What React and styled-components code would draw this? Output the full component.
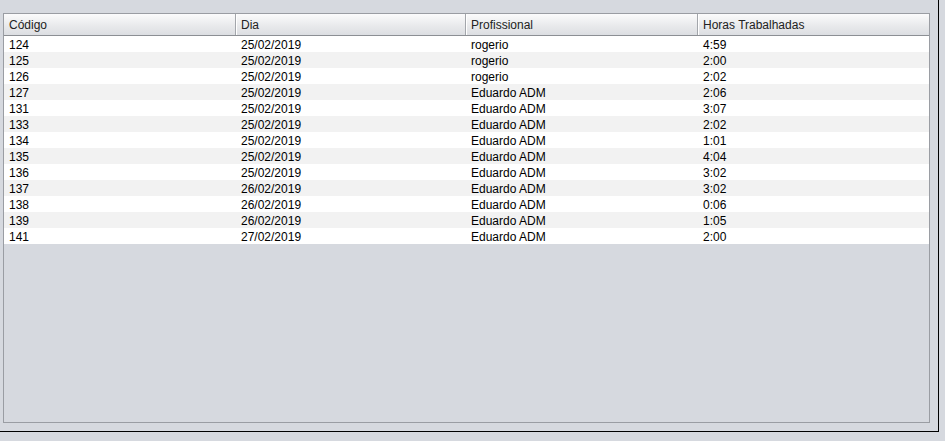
import React from 'react';
import styled, { createGlobalStyle } from 'styled-components';

const Global = createGlobalStyle`
  html, body {
    margin: 0;
    padding: 0;
    background: #d6d9df;
    font-family: "Liberation Sans", Arial, sans-serif;
  }
`;

const Frame = styled.div`
  box-sizing: border-box;
  width: 939px;
  height: 432px;
  border-right: 1px solid #000;
  border-bottom: 1px solid #000;
  padding: 13px 8px 8px 3px;
`;

const ScrollPane = styled.div`
  box-sizing: border-box;
  width: 927px;
  height: 410px;
  border: 1px solid #9a9da3;
  background: #d6d9df;
`;

const Table = styled.div`
  display: flex;
  flex-direction: column;
`;

const HeaderRow = styled.div`
  display: grid;
  grid-template-columns: 232px 230px 232px 1fr;
  height: 21px;
  border-bottom: 1px solid #8c8f94;
  background: linear-gradient(#fbfbfc, #e9eaec 55%, #dcdee2);
`;

const HeaderCell = styled.div`
  box-sizing: border-box;
  padding: 2px 0 0 5px;
  font-size: 12px;
  line-height: 19px;
  color: #222;
  border-right: 1px solid ${p => (p.$last ? 'transparent' : '#a3a6ab')};
  box-shadow: ${p => (p.$first ? 'none' : 'inset 1px 0 0 #fff')};
`;

const Row = styled.div`
  display: grid;
  grid-template-columns: 232px 230px 232px 1fr;
  height: 16px;
  overflow: hidden;
  background: ${p => (p.$odd ? '#f2f2f2' : '#ffffff')};
`;

const Cell = styled.div`
  padding: 2px 0 0 5px;
  font-size: 12px;
  line-height: 14px;
  color: #000;
  white-space: nowrap;
`;

const columns = ['Código', 'Dia', 'Profissional', 'Horas Trabalhadas'];

const rows = [
  ['124', '25/02/2019', 'rogerio', '4:59'],
  ['125', '25/02/2019', 'rogerio', '2:00'],
  ['126', '25/02/2019', 'rogerio', '2:02'],
  ['127', '25/02/2019', 'Eduardo ADM', '2:06'],
  ['131', '25/02/2019', 'Eduardo ADM', '3:07'],
  ['133', '25/02/2019', 'Eduardo ADM', '2:02'],
  ['134', '25/02/2019', 'Eduardo ADM', '1:01'],
  ['135', '25/02/2019', 'Eduardo ADM', '4:04'],
  ['136', '25/02/2019', 'Eduardo ADM', '3:02'],
  ['137', '26/02/2019', 'Eduardo ADM', '3:02'],
  ['138', '26/02/2019', 'Eduardo ADM', '0:06'],
  ['139', '26/02/2019', 'Eduardo ADM', '1:05'],
  ['141', '27/02/2019', 'Eduardo ADM', '2:00'],
];

const App = () => {
  return (
    <>
      <Global />
      <Frame>
        <ScrollPane>
          <Table>
            <HeaderRow>
              {columns.map((c, i) => (
                <HeaderCell key={c} $first={i === 0} $last={i === columns.length - 1}>
                  {c}
                </HeaderCell>
              ))}
            </HeaderRow>
            {rows.map((r, i) => (
              <Row key={r[0]} $odd={i % 2 === 1}>
                {r.map((v, j) => (
                  <Cell key={j}>{v}</Cell>
                ))}
              </Row>
            ))}
          </Table>
        </ScrollPane>
      </Frame>
    </>
  );
};

export default App;
